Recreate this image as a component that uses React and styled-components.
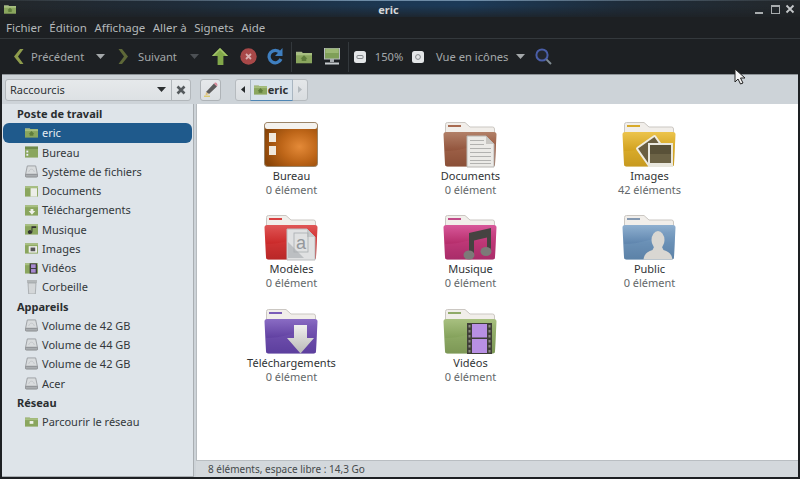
import React from 'react';
import styled, { createGlobalStyle } from 'styled-components';

const Global = createGlobalStyle`
  html, body { margin: 0; padding: 0; background: #1d2023; }
  #root { width: 800px; height: 479px; overflow: hidden; }
  * { box-sizing: border-box; }
`;

const FONT = `"Noto Sans", "Open Sans", sans-serif`;

const Win = styled.div`
  position: relative;
  width: 800px;
  height: 479px;
  display: flex;
  flex-direction: column;
  background: #1d2023;
  font-family: ${FONT};
  font-size: 11px;
  overflow: hidden;
`;

const TitleBar = styled.div`
  height: 17px;
  flex: none;
  display: flex;
  align-items: center;
  padding: 0 4px 0 4px;
  background:
    linear-gradient(180deg, rgba(29, 32, 35, 0) 30%, rgba(29, 32, 35, 0.75) 100%),
    linear-gradient(90deg, #23272a 0%, #1f2c39 22%, #1c3854 50%, #1c3a58 58%, #1e2c3a 78%, #24282b 100%);
  border-top: 1px solid;
  border-image: linear-gradient(90deg, #2c3135, #6d8ba6 45%, #6d8ba6 60%, #2c3135) 1;
`;
const TitleText = styled.div`
  flex: 1;
  text-align: center;
  color: #d4d6d8;
  font-size: 11px;
  font-weight: 700;
  margin-left: 8px;
`;
const WinButtons = styled.div`
  display: flex;
  align-items: center;
  gap: 3px;
`;

const MenuBar = styled.div`
  height: 22px;
  flex: none;
  display: flex;
  align-items: center;
  gap: 7.5px;
  padding-left: 6px;
  color: #b4b8ba;
  font-size: 11.5px;
  border-bottom: 1px solid #34393d;
`;

const Toolbar = styled.div`
  height: 35px;
  flex: none;
  display: flex;
  align-items: center;
  color: #a4a8aa;
  font-size: 11.2px;
`;
const Slot = styled.div`
  flex: none;
  width: ${p => p.$w}px;
  padding-left: ${p => p.$pad || 0}px;
  display: flex;
  align-items: center;
  justify-content: ${p => p.$left ? 'flex-start' : 'center'};
  white-space: nowrap;
`;
const VSep = styled.div`
  flex: none;
  width: 1px;
  height: 30px;
  background: #33383c;
`;

const Bar = styled.div`
  height: 30px;
  flex: none;
  display: flex;
  align-items: center;
  margin: 0 2px;
  background: #cdd3d8;
  border-top: 1px solid #8c9296;
  padding-left: 3px;
`;
const Combo = styled.div`
  width: 186px;
  height: 22px;
  display: flex;
  align-items: center;
  border: 1px solid #b2b7bb;
  border-radius: 3px;
  background: linear-gradient(#e6e9eb, #dde1e4);
  color: #2f3335;
  font-size: 11px;
`;
const ComboLabel = styled.div`
  flex: 1;
  padding-left: 4px;
`;
const ComboCaret = styled.div`
  width: 20px;
  display: flex;
  justify-content: center;
`;
const ComboClose = styled.div`
  width: 19px;
  height: 100%;
  border-left: 1px solid #b2b7bb;
  display: flex;
  align-items: center;
  justify-content: center;
`;
const EditBtn = styled.div`
  width: 21px;
  height: 22px;
  margin-left: 9px;
  border: 1px solid #aeb3b7;
  border-radius: 3px;
  background: linear-gradient(#e6e9eb, #dbdfe2);
  display: flex;
  align-items: center;
  justify-content: center;
`;
const Path = styled.div`
  margin-left: 14px;
  height: 22px;
  width: 73px;
  display: flex;
  border: 1px solid #b6bbbf;
  border-radius: 3px;
  background: linear-gradient(#e4e7e9, #d9dde0);
`;
const PathArrow = styled.div`
  width: 14px;
  display: flex;
  align-items: center;
  justify-content: center;
`;
const PathCrumb = styled.div`
  width: 44px;
  display: flex;
  align-items: center;
  gap: 1px;
  padding-left: 3px;
  font-weight: 700;
  color: #2e3234;
  font-size: 11px;
  background: #d8e2ea;
  border: 1px solid #a9b6c1;
  border-bottom-color: #4f86b4;
  margin: -1px 0;
`;

const Body = styled.div`
  flex: 1;
  min-height: 0;
  display: flex;
  margin: 0 2px 2px;
`;
const Sidebar = styled.div`
  width: 191px;
  flex: none;
  background: #dee4e9;
  color: #33383b;
  font-size: 11px;
  border-bottom: 1px solid #a9aeb2;
`;
const Head = styled.div`
  height: 19.25px;
  display: flex;
  align-items: center;
  padding-left: 15px;
  font-weight: 700;
  color: #2a2e30;
`;
const Row = styled.div`
  height: 19.25px;
  display: flex;
  align-items: center;
  gap: 4px;
  padding-left: 22px;
  margin: 0 1px;
  border-radius: 6px;
  background: ${p => p.$sel ? '#1f5a8c' : 'transparent'};
  color: ${p => p.$sel ? '#e6edf3' : '#33383b'};
`;
const IconBox = styled.div`
  width: 13px;
  height: 13px;
  flex: none;
  display: flex;
  align-items: center;
  justify-content: center;
`;
const Divider = styled.div`
  width: 3px;
  flex: none;
  background: #cdd3d8;
  border-left: 1px solid #a9aeb2;
`;
const Main = styled.div`
  flex: 1;
  min-width: 0;
  display: flex;
  flex-direction: column;
`;
const Canvas = styled.div`
  flex: 1;
  background: #fff;
  padding: 17px 0 0 5px;
  display: grid;
  grid-template-columns: repeat(3, 179px);
  grid-auto-rows: 93.4px;
  align-content: start;
  border-left: 1px solid #b6bbbf;
`;
const Tile = styled.div`
  display: flex;
  flex-direction: column;
  align-items: center;
  font-size: 11px;
  line-height: 14px;
`;
const TileIcon = styled.div`
  width: 56px;
  height: 47px;
  margin: 0 0 1px -2px;
`;
const TileName = styled.div`
  color: #303335;
`;
const TileCount = styled.div`
  color: #64686a;
`;
const Status = styled.div`
  height: 17px;
  flex: none;
  background: #d3d8dc;
  border-top: 1px solid #b9bec2;
  display: flex;
  align-items: center;
  padding: 0 0 1px 12px;
  color: #44484a;
  font-size: 10px;
`;
const Pointer = styled.svg`
  position: absolute;
  left: 734px;
  top: 68px;
`;

/* ---------- toolbar icons ---------- */
const Caret = ({ c = '#a4a8aa' }) => (
  <svg width="9" height="5" viewBox="0 0 9 5"><path d="M0 0h9L4.500 5z" fill={c} /></svg>
);
const Chevron = ({ dir, c }) => (
  <svg width="11" height="15" viewBox="0 0 11 15">
    <path d={dir === 'l' ? 'M7 0h3.500L5 7.500l5.500 7.500H7L1 7.500z' : 'M4 0H.5L6 7.500.5 15H4l6-7.500z'} fill={c} />
  </svg>
);
const Up = () => (
  <svg width="16" height="17" viewBox="0 0 16 17">
    <path d="M8 0l8 8h-4.600v9H5.600V8H0z" fill="#82a84a" />
    <path d="M8 0l8 8h-2L8 2 2 8H0z" fill="#a4c46a" />
  </svg>
);
const Stop = () => (
  <svg width="17" height="17" viewBox="0 0 17 17">
    <circle cx="8.500" cy="8.500" r="8.200" fill="#a84848" />
    <path d="M6 6l5 5M11 6l-5 5" stroke="#d9b0b0" strokeWidth="1.800" />
  </svg>
);
const Reload = () => (
  <svg width="16" height="17" viewBox="0 0 16 17">
    <path d="M13 4.500A6.200 6.200 0 1 0 14 11" fill="none" stroke="#3f7fc0" strokeWidth="3.200" />
    <path d="M15.500 0v8H8z" fill="#3f7fc0" />
  </svg>
);
const Computer = () => (
  <svg width="16" height="17" viewBox="0 0 16 17">
    <rect x="0.500" y="0" width="15" height="11" fill="#7f9f58" stroke="#b8bcc0" />
    <rect x="1.500" y="1" width="13" height="4" fill="#9cb874" />
    <rect x="6" y="11" width="4" height="3" fill="#a8acb0" />
    <rect x="1" y="14.500" width="14" height="2" fill="#c8cccf" />
  </svg>
);
const ZoomBtn = ({ plus }) => (
  <svg width="12" height="12" viewBox="0 0 12 12">
    <rect width="12" height="12" rx="2.500" fill="#e4e6e8" />
    {plus
      ? <circle cx="6" cy="6" r="2.400" fill="none" stroke="#85898c" />
      : <rect x="3" y="4.500" width="6" height="3" rx="0.500" fill="none" stroke="#85898c" />}
  </svg>
);
const Search = () => (
  <svg width="17" height="17" viewBox="0 0 17 17">
    <circle cx="7" cy="7" r="5.600" fill="#23262c" stroke="#4a5ea8" strokeWidth="2" />
    <path d="M11.400 11.400L16 16" stroke="#7f8a90" strokeWidth="2" />
  </svg>
);

/* ---------- small icons ---------- */
const MiniHome = ({ w = 14, h = 11, mark = 'home' }) => (
  <svg width={w} height={h} viewBox="0 0 14 11">
    <path d="M0 2V1h5l1 1h7v1H0z" fill="#a9b98c" />
    <rect x="0" y="2" width="14" height="9" fill="#8aa65e" />
    <rect x="0" y="2" width="14" height="2" fill="#a7bf80" />
    {mark === 'home' && <path d="M7 4l3 3H9v2H5V7H4z" fill="#5f7d3c" />}
    {mark === 'net' && <rect x="5" y="5" width="4" height="3" fill="#f0f2ea" />}
  </svg>
);
const MiniDrive = () => (
  <svg width="14" height="13" viewBox="0 0 14 13">
    <path d="M2.500 .5h9L13.500 10h-13z" fill="#d9dcde" stroke="#9a9ea1" />
    <rect x="0.500" y="9.500" width="13" height="3" rx="1" fill="#a9adb0" stroke="#8a8e91" />
    <path d="M4 7c1-4 5-4 6 0" fill="none" stroke="#c0c4c7" />
  </svg>
);
const MiniGreen = ({ kind }) => (
  <svg width="14" height="12" viewBox="0 0 14 12">
    <rect y="1" width="14" height="11" fill="#8aa65e" />
    <rect y="1" width="14" height="2" fill="#a7bf80" />
    {kind === 'desk' && <><rect width="14" height="3" fill="#6f8a4a" /><rect x="1.500" y="4.500" width="2" height="2" fill="#eef" /><rect x="1.500" y="8" width="2" height="2" fill="#eef" /></>}
    {kind === 'doc' && <rect x="6" y="3" width="7" height="9" fill="#eceee8" />}
    {kind === 'dl' && <path d="M6 5h3v2h2l-3.500 4L4 7h2z" fill="#eef0e8" />}
    {kind === 'music' && <path d="M6 11a2 2 0 1 1 1-2V3h5v2H8v4a2 2 0 0 1-2 2z" fill="#333" />}
    {kind === 'img' && <><rect x="4" y="4" width="9" height="7" fill="#eee" /><rect x="6" y="5.500" width="5" height="4" fill="#555" /></>}
    {kind === 'film' && <><rect x="5" y="1" width="8" height="11" fill="#3a3a38" /><rect x="6.500" y="2" width="5" height="4" fill="#a88ad0" /><rect x="6.500" y="7" width="5" height="4" fill="#a88ad0" /></>}
  </svg>
);
const MiniTrash = () => (
  <svg width="12" height="14" viewBox="0 0 12 14">
    <rect x="1" y="0" width="10" height="3" fill="#b4b8ba" />
    <path d="M2 3h8l-.7 11H2.700z" fill="#d4d7d9" stroke="#9a9ea1" strokeWidth=".7" />
  </svg>
);
const Pencil = () => (
  <svg width="14" height="15" viewBox="0 0 14 15">
    <path d="M2 10L10 1.500l3 3L5 12z" fill="#5b5b5b" />
    <path d="M10 1.500l1-1c1-.5 2.500 1 2.500 2.500l-.5 1.500z" fill="#d88a9a" />
    <path d="M2 10l3 2-3.500 1.500z" fill="#e0c080" />
    <path d="M0 14.200h6" stroke="#d8c040" />
  </svg>
);
const XMark = () => (
  <svg width="10" height="10" viewBox="0 0 10 10">
    <path d="M1.500 1.500l7 7M8.500 1.500l-7 7" stroke="#555a5d" strokeWidth="2.600" />
  </svg>
);

/* ---------- folder icons ---------- */
const FOLDERS = {
  doc: ['#b28068', '#94573f', '#7b4029', '#a86e52'],
  img: ['#ecc44c', '#d4a422', '#b88a12', '#e2b838'],
  tpl: ['#e05656', '#cc2c2c', '#a81c1c', '#d84040'],
  mus: ['#d8589a', '#b8306e', '#98205a', '#c84488'],
  pub: ['#8fb0d0', '#6288b0', '#4c7298', '#7ba0c4'],
  dl: ['#8a6cc4', '#6444a4', '#4c3090', '#7a5cb8'],
  vid: ['#a8c080', '#87a45e', '#6e8a48', '#98b270'],
};
const stripe = { doc: '#a86a50', img: '#d8aa2a', tpl: '#d84040', mus: '#c04a88', pub: '#8498b0', dl: '#7a5cb8', vid: '#90aa68' };

const Folder = ({ id, children }) => {
  const [a, b, c, d] = FOLDERS[id];
  return (
    <svg width="56" height="47" viewBox="0 0 56 47">
      <defs>
        <linearGradient id={`g${id}`} x1="0" y1="0" x2="0" y2="1">
          <stop offset="0" stopColor={a} />
          <stop offset="0.5" stopColor={b} />
          <stop offset="1" stopColor={c} />
        </linearGradient>
      </defs>
      <path d="M3.500 14V3.500Q3.500 1.500 5.500 1.500H23L28 6H50.500Q52.500 6 52.500 8V14z" fill="#f1eeea" stroke="#cbc7c2" />
      <rect x="6" y="4" width="13" height="2" fill={stripe[id]} />
      <path d="M1.500 13.500Q1.500 11 4 11H52Q54.500 11 54.500 13.500L53 43Q53 45.500 50.500 45.500H5.500Q3 45.500 3 43z" fill={`url(#g${id})`} />
      <path d="M3 30Q24 30 54 16L53 43Q53 45.500 50.500 45.500H5.500Q3 45.500 3 43z" fill={d} opacity="0.35" />
      {children}
    </svg>
  );
};

const DocMark = () => (
  <g>
    <path d="M25 15H44L52 23V46H25z" fill="#ebeae7" stroke="#b8b6b2" />
    <path d="M44 15V23H52z" fill="#c8c6c2" />
    {[19, 23, 27, 31, 35, 39, 42].map(y => (
      <rect key={y} x="28" y={y} width={y < 24 ? 14 : 21} height="1" fill="#b2b2b0" />
    ))}
  </g>
);
const ImgMark = () => (
  <g>
    <rect x="20" y="19" width="22" height="22" rx="1" transform="rotate(-35 31 30)" fill="#6a5e40" stroke="#efece0" strokeWidth="2" />
    <rect x="27" y="22" width="25" height="24" fill="#e9e7de" />
    <rect x="29" y="24" width="21" height="18" fill="#595138" />
    <rect x="29" y="33" width="21" height="9" fill="#6c6346" />
  </g>
);
const TplMark = () => (
  <g>
    <path d="M24 15H44L52 23V46H24z" fill="#e0e1e2" stroke="#bcbec0" />
    <path d="M44 15V23H52z" fill="#c6c8ca" />
    <path d="M25 28V44H41z" fill="#bcbfc2" />
    <rect x="31" y="19" width="14" height="19" fill="none" stroke="#a8acaf" strokeWidth=".8" />
    <text x="33" y="35" fontFamily="Liberation Sans, sans-serif" fontSize="18" fill="#94989c">a</text>
  </g>
);
const MusMark = () => (
  <g>
    <path d="M27 19L49 14V38h-4V23.500L32 26.500V42h-5z" fill="#454341" />
    <ellipse cx="27" cy="41" rx="5.500" ry="4.500" fill="#7c7a78" />
    <ellipse cx="44" cy="37.500" rx="5.500" ry="4.500" fill="#7c7a78" />
  </g>
);
const PubMark = () => (
  <g fill="#d9d7d2">
    <ellipse cx="37" cy="26" rx="6.500" ry="9" />
    <path d="M33 33h8l1.500 3c5 1.500 8 3.500 9 9.500H22.500c1-6 4-8 9-9.500z" />
  </g>
);
const DlMark = () => (
  <g>
    <defs>
      <linearGradient id="dlArrow" x1="0" y1="0" x2="0" y2="1">
        <stop offset="0" stopColor="#f0f0ee" />
        <stop offset="1" stopColor="#b8b8b6" />
      </linearGradient>
    </defs>
    <path d="M31 17H44V30H51L37.500 45.500 24 30H31z" fill="url(#dlArrow)" />
  </g>
);
const VidMark = () => (
  <g>
    <rect x="25" y="15" width="25" height="31" fill="#3f3e38" />
    {[17, 22, 27, 32, 37, 42].map(y => (
      <React.Fragment key={y}>
        <rect x="26.500" y={y} width="2" height="2.500" fill="#8a8a80" />
        <rect x="46.500" y={y} width="2" height="2.500" fill="#8a8a80" />
      </React.Fragment>
    ))}
    <rect x="30" y="16" width="15" height="13.500" fill="#b890e4" />
    <rect x="30" y="31" width="15" height="14" fill="#b890e4" />
  </g>
);
const Desk = () => (
  <svg width="56" height="47" viewBox="0 0 56 47">
    <defs>
      <radialGradient id="desk" cx="0.66" cy="0.55" r="0.7">
        <stop offset="0" stopColor="#e48a38" />
        <stop offset="0.5" stopColor="#bd6518" />
        <stop offset="1" stopColor="#8a4508" />
      </radialGradient>
    </defs>
    <rect x="1.500" y="1.500" width="53" height="44" rx="3" fill="url(#desk)" stroke="#9a8468" />
    <rect x="2" y="2" width="52" height="6" rx="2" fill="#f4f2ee" />
    <rect x="6" y="12" width="7" height="9" fill="#f0e8dc" />
    <rect x="6" y="25" width="7" height="9" fill="#f0e8dc" />
  </svg>
);

const tiles = [
  ['Bureau', '0 élément', <Desk />],
  ['Documents', '0 élément', <Folder id="doc"><DocMark /></Folder>],
  ['Images', '42 éléments', <Folder id="img"><ImgMark /></Folder>],
  ['Modèles', '0 élément', <Folder id="tpl"><TplMark /></Folder>],
  ['Musique', '0 élément', <Folder id="mus"><MusMark /></Folder>],
  ['Public', '0 élément', <Folder id="pub"><PubMark /></Folder>],
  ['Téléchargements', '0 élément', <Folder id="dl"><DlMark /></Folder>],
  ['Vidéos', '0 élément', <Folder id="vid"><VidMark /></Folder>],
];

const places = [
  ['Bureau', <MiniGreen kind="desk" />],
  ['Système de fichiers', <MiniDrive />],
  ['Documents', <MiniGreen kind="doc" />],
  ['Téléchargements', <MiniGreen kind="dl" />],
  ['Musique', <MiniGreen kind="music" />],
  ['Images', <MiniGreen kind="img" />],
  ['Vidéos', <MiniGreen kind="film" />],
  ['Corbeille', <MiniTrash />],
];

export default function App() {
  return (
    <Win>
      <Global />
      <TitleBar>
        <MiniHome w={12} h={10} />
        <TitleText>eric</TitleText>
        <WinButtons>
          <svg width="13" height="11" viewBox="0 0 13 11"><rect x="2" y="8" width="8" height="2" fill="#a8acae" /></svg>
          <svg width="13" height="11" viewBox="0 0 13 11"><rect x="2.500" y="1.500" width="8" height="8" fill="none" stroke="#a8acae" /><rect x="2" y="1" width="9" height="2" fill="#a8acae" /></svg>
          <svg width="11" height="11" viewBox="0 0 11 11"><path d="M1.500 1.500l7 7M8.500 1.500l-7 7" stroke="#c4c7c9" strokeWidth="1.800" /></svg>
        </WinButtons>
      </TitleBar>
      <MenuBar>
        <span>Fichier</span><span>Édition</span><span>Affichage</span><span>Aller à</span><span>Signets</span><span>Aide</span>
      </MenuBar>
      <Toolbar>
        <Slot $w={31} $pad={6}><Chevron dir="l" c="#8e9c4c" /></Slot>
        <Slot $w={60} $left>Précédent</Slot>
        <Slot $w={18}><Caret /></Slot>
        <Slot $w={29}><Chevron dir="r" c="#5e6838" /></Slot>
        <Slot $w={47} $left>Suivant</Slot>
        <Slot $w={18}><Caret c="#4c5054" /></Slot>
        <Slot $w={34}><Up /></Slot>
        <Slot $w={22}><Stop /></Slot>
        <Slot $w={32}><Reload /></Slot>
        <VSep />
        <Slot $w={24}><MiniHome w={16} h={14} /></Slot>
        <Slot $w={32}><Computer /></Slot>
        <VSep />
        <Slot $w={22}><ZoomBtn /></Slot>
        <Slot $w={36}>150%</Slot>
        <Slot $w={22}><ZoomBtn plus /></Slot>
        <Slot $w={84} $left $pad={7}>Vue en icônes</Slot>
        <Slot $w={14}><Caret /></Slot>
        <Slot $w={32}><Search /></Slot>
      </Toolbar>
      <Bar>
        <Combo>
          <ComboLabel>Raccourcis</ComboLabel>
          <ComboCaret><Caret c="#2c2f31" /></ComboCaret>
          <ComboClose><XMark /></ComboClose>
        </Combo>
        <EditBtn><Pencil /></EditBtn>
        <Path>
          <PathArrow><svg width="4" height="7" viewBox="0 0 4 7"><path d="M4 0v7L0 3.500z" fill="#26292b" /></svg></PathArrow>
          <PathCrumb><MiniHome w={13} h={11} />eric</PathCrumb>
          <PathArrow><svg width="4" height="7" viewBox="0 0 4 7"><path d="M0 0v7l4-3.500z" fill="#b4babe" /></svg></PathArrow>
        </Path>
      </Bar>
      <Body>
        <Sidebar>
          <Head>Poste de travail</Head>
          <Row $sel><IconBox><MiniHome /></IconBox>eric</Row>
          {places.map(([n, i]) => <Row key={n}><IconBox>{i}</IconBox>{n}</Row>)}
          <Head>Appareils</Head>
          <Row><IconBox><MiniDrive /></IconBox>Volume de 42 GB</Row>
          <Row><IconBox><MiniDrive /></IconBox>Volume de 44 GB</Row>
          <Row><IconBox><MiniDrive /></IconBox>Volume de 42 GB</Row>
          <Row><IconBox><MiniDrive /></IconBox>Acer</Row>
          <Head>Réseau</Head>
          <Row><IconBox><MiniHome mark="net" /></IconBox>Parcourir le réseau</Row>
        </Sidebar>
        <Divider />
        <Main>
          <Canvas>
            {tiles.map(([n, c, icon]) => (
              <Tile key={n}>
                <TileIcon>{icon}</TileIcon>
                <TileName>{n}</TileName>
                <TileCount>{c}</TileCount>
              </Tile>
            ))}
          </Canvas>
          <Status>8 éléments, espace libre : 14,3 Go</Status>
        </Main>
      </Body>
      <Pointer width="13" height="17" viewBox="0 0 13 17">
        <path d="M1 1v13l3-3 2.500 5 2.500-1-2.500-5H11z" fill="#f4f4f4" stroke="#222" strokeWidth="1" />
      </Pointer>
    </Win>
  );
}
